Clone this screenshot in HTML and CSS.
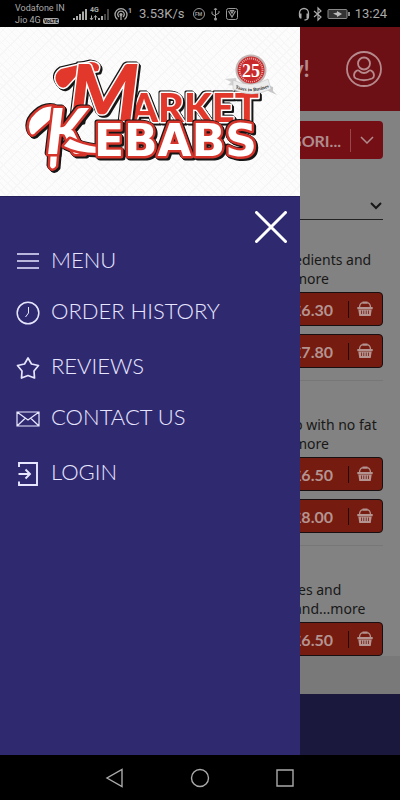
FILE: index.html
```html
<!DOCTYPE html>
<html lang="en">
<head>
<meta charset="utf-8">
<meta name="viewport" content="width=device-width, initial-scale=1">
<title>Market Kebabs</title>
<link rel="stylesheet" href="styles.css">
</head>
<body>
<svg class="defs" aria-hidden="true">
  <symbol id="basket" viewBox="0 0 16 16">
    <path d="M2.500 6.500Q2.500 3 5 1.800h6Q13.500 3 13.500 6.500" fill="none" stroke="currentColor" stroke-width="1.200"/>
    <path d="M5.500 1.500h5" stroke="currentColor" stroke-width="2"/>
    <path d="M.300 6h15.400v2.200H.300z" fill="currentColor"/>
    <path fill-rule="evenodd" fill="currentColor" d="M1.300 8.500h13.400l-1 6.500H2.300zM4 9.500v3.500h.800V9.500zM6.400 9.500v3.500h.800V9.500zM8.800 9.500v3.500h.800V9.500zM11.200 9.500v3.500h.800V9.500z"/>
  </symbol>
</svg>

<div class="status">
  <div class="carrier"><span>Vodafone IN</span><span>Jio 4G <b class="volte">VoLTE</b></span></div>
  <svg class="signals" width="60" height="18" viewBox="0 0 60 18" aria-hidden="true">
    <path d="M1 15v-2M4 15v-4M7 15V9M10 15V6.500M13 15V4" stroke="#aaa" stroke-width="2"/>
    <text x="17" y="7" class="tiny">4G</text>
    <path d="M18.500 10.500v4M17 13l1.500 2 1.500-2M22.500 15v-4M21 12.500l1.500-2 1.500 2" stroke="#aaa" fill="none"/>
    <path d="M26 15v-2M29 15v-4" stroke="#aaa" stroke-width="2"/>
    <path d="M32 15V9M35 15V4" stroke="#444" stroke-width="2"/>
    <g fill="none" stroke="#aaa" stroke-width="1.300"><path d="M44.500 14.500a6 6 0 1 1 7 0M46 12a3.300 3.300 0 1 1 4 0"/><path d="M48 9v6"/></g>
    <circle cx="48" cy="9.500" r="1.500" fill="#aaa"/>
    <text x="55" y="8" class="tiny">1</text>
  </svg>
  <span class="speed">3.53K/s</span>
  <svg class="services" width="48" height="16" viewBox="0 0 48 16" aria-hidden="true">
    <circle cx="7" cy="8" r="5.500" fill="none" stroke="#999"/>
    <text x="3" y="10" class="micro">FM</text>
    <g fill="none" stroke="#999"><path d="M23.500 12V3M23.500 10l-3.500-2V5.500M23.500 9l3.500-2V5"/><path d="M22 4l1.500-2L25 4"/></g>
    <circle cx="23.500" cy="13" r="1.500" fill="#999"/>
    <rect x="34.500" y="2.500" width="11" height="11" rx="2" fill="none" stroke="#999"/>
    <path d="M36.500 5l3.500 6 3.500-6M38.500 4.500h3L40 7z" fill="none" stroke="#999" stroke-width="1.200"/>
  </svg>
  <svg class="devices" width="53" height="16" viewBox="0 0 53 16" aria-hidden="true">
    <path d="M1.500 10V7a4.500 4.500 0 0 1 9 0v3q0 4-4 4" fill="none" stroke="#aaa" stroke-width="1.300"/>
    <path d="M1 7.500h2.500v5H2L1 11zM8.500 7.500H11V11l-1 1.500H8.500z" fill="#aaa"/>
    <path d="M16 5l7 6-3 3V2l3 3-7 6" fill="none" stroke="#aaa" stroke-width="1.200"/>
    <rect x="30" y="3.500" width="19" height="9" rx="1" fill="#333" stroke="#888"/>
    <path d="M50 6h2v4h-2z" fill="#888"/>
    <path d="M35 7.500l4-1V5l5 3-5 3V9.500z" fill="#bbb"/>
  </svg>
  <time class="clock">13:24</time>
</div>

<div class="stage">
  <main class="page">
    <header class="page-head">
      <h1>y!</h1>
      <button class="profile" type="button" aria-label="Account">
        <svg width="38" height="38" viewBox="0 0 38 38" fill="none" stroke="currentColor" stroke-width="1.800" aria-hidden="true">
          <circle cx="19" cy="19" r="17"/><circle cx="19" cy="13.500" r="6"/>
          <path d="M12 20.500q-3 1.500-3 5 0 2 2 3 8 3.500 16 0 2-1 2-3 0-3.500-3-5-2-.500-3 1-1.500 1.500-4 1.500t-4-1.500q-1-1.500-3-1z"/>
        </svg>
      </button>
    </header>
    <div class="filters">
      <button class="categories" type="button">
        <span>GORI...</span>
        <svg width="14" height="8" viewBox="0 0 14 8" fill="none" stroke="currentColor" stroke-width="1.500" aria-hidden="true"><path d="M1 1l6 6 6-6"/></svg>
      </button>
      <button class="sort" type="button" aria-label="Choose section">
        <svg width="12" height="8" viewBox="0 0 12 8" fill="none" stroke="currentColor" stroke-width="2" aria-hidden="true"><path d="M1 1l5 5 5-5"/></svg>
      </button>
    </div>
    <section class="dishes">
      <article class="dish">
        <p><span>edients and</span><span>more</span></p>
        <button class="price" type="button"><span>£6.30</span><i></i><svg aria-hidden="true"><use href="#basket"/></svg></button>
        <button class="price" type="button"><span>£7.80</span><i></i><svg aria-hidden="true"><use href="#basket"/></svg></button>
      </article>
      <article class="dish">
        <p><span>p with no fat</span><span>more</span></p>
        <button class="price" type="button"><span>£6.50</span><i></i><svg aria-hidden="true"><use href="#basket"/></svg></button>
        <button class="price" type="button"><span>£8.00</span><i></i><svg aria-hidden="true"><use href="#basket"/></svg></button>
      </article>
      <article class="dish">
        <p><span class="inset">es and</span><span>and...more</span></p>
        <button class="price" type="button"><span>£6.50</span><i></i><svg aria-hidden="true"><use href="#basket"/></svg></button>
      </article>
    </section>
    <div class="band"></div>
    <footer class="page-foot"></footer>
  </main>

  <aside class="drawer">
    <div class="brand">
      <svg viewBox="0 27 300 169" role="img" aria-label="Market Kebabs, 25 years in business">
        <g class="edge red">
          <text x="130" y="122" class="caps-top">ARKET</text>
        </g>
        <g class="edge red">
          <path d="M59 86Q51 76 61 69L91 62Q102 63 98 71L78 74 68 85Q64 90 59 86z"/>
          <text x="69" y="121" class="script-m">M</text>
        </g>
        <g class="edge white">
          <path d="M51 145L58 142 56 166Q52 171 50 166z"/>
          <path d="M30 132Q26 122 36 113 45 105 55 107 61 111 53 117L36 132Q32 137 30 132z"/>
          <text x="46" y="154" class="script-k">K</text>
          <path d="M70 139Q82 145 97 147L97 153Q78 153 64 146z"/>
          <text x="94" y="156" class="caps-low">EBABS</text>
        </g>
        <g>
          <circle cx="251" cy="70" r="14.500" fill="#c92a2b" stroke="#c4b5b5" stroke-width="2"/>
          <circle cx="251" cy="70" r="11.500" fill="none" stroke="#e7a9a9" stroke-width="2" stroke-dasharray="1 1"/>
          <circle cx="251" cy="71" r="10" fill="#c92a2b"/>
          <path d="M225 79l11-1 1 8-9-1 3-3z" fill="#d2d2d2"/><path d="M277 95l-11-5-1-6 8 3 0 4z" fill="#c6c6c6"/>
          <path d="M233 80q18 9 35-1l3 10q-20 10-38 0z" fill="#ececec" stroke="#bbb" stroke-width=".500"/>
          <path id="ribbon" d="M235 88q16 7 35-1" fill="none"/>
          <text x="242" y="77" class="years">25</text>
          <text class="motto"><textPath href="#ribbon">Years in Business</textPath></text>
        </g>
      </svg>
    </div>
    <button class="close" type="button" aria-label="Close menu">
      <svg width="32" height="32" viewBox="0 0 32 32" fill="none" stroke="currentColor" stroke-width="3" stroke-linecap="round" aria-hidden="true"><path d="M1.500 1.500l29 29M30.500 1.500l-29 29"/></svg>
    </button>
    <nav class="menu">
      <a href="#menu"><svg viewBox="0 0 24 24" aria-hidden="true"><path d="M1 4h22M1 11h22M1 18h22"/></svg>MENU</a>
      <a href="#orders"><svg viewBox="0 0 24 24" aria-hidden="true"><circle cx="12" cy="12" r="10.800"/><path d="M12.500 6v6l-3 4" stroke-width="1"/></svg>ORDER HISTORY</a>
      <a class="spaced" href="#reviews"><svg viewBox="0 0 24 24" aria-hidden="true"><path d="M12 2l3.500 6 7 1.500-4.500 5.500.500 7-6.500-2.500-6.500 2.500.500-7L1.500 9.500l7-1.500z" stroke-width="1.700" stroke-linejoin="round"/></svg>REVIEWS</a>
      <a href="#contact"><svg viewBox="0 0 24 24" aria-hidden="true"><path d="M1 5h22v14H1zM1 5l11 8 11-8M1 19l8.500-8M23 19l-8.500-8" stroke-width="1.200"/></svg>CONTACT US</a>
      <a class="spaced" href="#login"><svg viewBox="0 0 24 24" aria-hidden="true"><path d="M3 5V1h18v22H3v-3.500M2.500 12h11M9.500 7.500l4.500 4.500-4.500 4.500" stroke-width="1.900"/></svg>LOGIN</a>
    </nav>
  </aside>
</div>

<nav class="system" aria-label="System">
  <button type="button" aria-label="Back"><svg width="20" height="20" viewBox="0 0 20 20"><path d="M17 1.500v17L2 10z"/></svg></button>
  <button type="button" aria-label="Home"><svg width="20" height="20" viewBox="0 0 20 20"><circle cx="10" cy="10" r="8.500"/></svg></button>
  <button type="button" aria-label="Recent apps"><svg width="20" height="20" viewBox="0 0 20 20"><path d="M2 2h16v16H2z"/></svg></button>
</nav>
</body>
</html>
```
FILE: styles.css
```css
* { box-sizing: border-box; }

body {
  margin: 0;
  min-height: 100vh;
  display: flex;
  flex-direction: column;
  background: #000;
  font-family: Lato, "Liberation Sans", sans-serif;
}

button {
  margin: 0;
  padding: 0;
  border: 0;
  background: none;
  color: inherit;
  font: inherit;
}

svg { display: block; flex: none; }
h1, p { margin: 0; }
.defs { display: none; }

/* Phone status bar */
.status {
  display: flex;
  align-items: center;
  height: 27px;
  padding: 0 13px 0 15px;
  color: #aaa;
  font-family: Roboto, sans-serif;
  font-size: 13px;
}
.carrier {
  display: flex;
  flex-direction: column;
  width: 58px;
  font-size: 9px;
  line-height: 12px;
  white-space: nowrap;
}
.volte {
  padding: 0 1px;
  border-radius: 2px;
  background: #aaa;
  color: #000;
  font-size: 5px;
  line-height: 8px;
}
.tiny { font-size: 7px; font-weight: 700; fill: #aaa; }
.micro { font-size: 5px; font-weight: 700; fill: #999; }
.speed { margin-left: 6px; }
.services { margin-left: 7px; }
.devices { margin-left: auto; }
.clock { margin-left: 4px; }

/* Dimmed ordering page behind the drawer */
.stage {
  position: relative;
  flex: 1;
  display: flex;
  overflow: hidden;
}
.page {
  flex: 1;
  display: flex;
  flex-direction: column;
  background: #828282;
  color: #181818;
}
.page-head {
  display: flex;
  align-items: center;
  justify-content: space-between;
  height: 84px;
  padding: 0 17px 0 73%;
  background: #6d1016;
  color: #b68a8c;
}
.page-head h1 { font-size: 22px; line-height: 24px; }
.filters {
  display: flex;
  flex-direction: column;
  padding: 10px 17px 0 70%;
}
.categories {
  display: flex;
  align-items: center;
  justify-content: flex-end;
  height: 38px;
  padding-right: 9px;
  border-radius: 4px;
  background: #741015;
  color: #b08c8e;
  font-size: 16px;
  font-weight: 700;
}
.categories span {
  padding-right: 9px;
  border-right: 1px solid #99474a;
  line-height: 23px;
}
.categories svg { margin-left: 9px; }
.sort {
  display: flex;
  justify-content: flex-end;
  align-items: center;
  height: 61px;
  padding: 34px 1px 0 0;
  border-bottom: 1px solid #222;
}
.dishes { padding: 0 17px 0 70%; }
.dish {
  display: flex;
  flex-direction: column;
  gap: 8px;
  padding: 34px 0 12px;
  border-bottom: 1px solid #777;
}
.dish:first-child { padding-top: 30px; }
.dish:last-child { padding-bottom: 0; border-bottom: 0; }
.dish p {
  display: flex;
  flex-direction: column;
  margin-bottom: -4px;
  padding-left: 14px;
  font-family: "Noto Sans", sans-serif;
  font-size: 14px;
  line-height: 19px;
  white-space: nowrap;
}
.inset { padding-left: 4px; }
.price {
  display: flex;
  align-items: center;
  justify-content: flex-end;
  height: 34px;
  padding-right: 9px;
  border: 1px solid #181010;
  border-radius: 4px;
  background: #751b10;
  color: #b49490;
  font-size: 16px;
  font-weight: 700;
}
.price i {
  width: 1px;
  height: 17px;
  margin: 0 8px 0 15px;
  background: #200c08;
}
.price svg { width: 16px; height: 16px; }
.band { flex: 1; min-height: 37px; background: #797979; }
.page-foot { height: 61px; background: #1a183c; }

/* Navigation drawer */
.drawer {
  position: absolute;
  inset: 0 25% 0 0;
  display: flex;
  flex-direction: column;
  background: #2f2a70;
  color: #fff;
}
.brand {
  border-bottom: 1px solid #24205c;
  background:
    repeating-linear-gradient(45deg, transparent 0 4px, #f7f7f7 4px 5px),
    repeating-linear-gradient(-45deg, #fcfcfc 0 7px, #f6f6f6 7px 8px);
}
.brand svg { width: 100%; }
.edge {
  stroke-linejoin: round;
  paint-order: stroke;
  filter: drop-shadow(1px 1px 0 #161616) drop-shadow(-1px -1px 0 #161616) drop-shadow(1px 1px 0 #161616);
}
.red { fill: #e2382c; stroke: #fff; stroke-width: 3px; }
.white { fill: #fff; stroke: #d5342b; stroke-width: 5px; }
.script-m { font: italic 900 79px Lato, sans-serif; }
.script-k { font: italic 900 62px Lato, sans-serif; }
.caps-top { font: 900 40px Lato, sans-serif; }
.caps-low { font: 700 44px "DejaVu Sans", sans-serif; }
.years { font: 700 18px "Liberation Serif", serif; fill: #fff; }
.motto { font: 700 5px "Liberation Serif", serif; fill: #333; }
.close { align-self: flex-end; margin: 14px 13px 0 0; }
.menu {
  display: flex;
  flex-direction: column;
  gap: 21px;
  padding: 2px 16px;
}
.menu a {
  display: flex;
  align-items: center;
  gap: 11px;
  color: #e8e6ff;
  font-size: 22px;
  font-weight: 300;
  line-height: 30px;
  text-decoration: none;
  white-space: nowrap;
}
.menu .spaced { margin-top: 4px; }
.menu svg {
  width: 24px;
  height: 24px;
  margin-top: 4px;
  fill: none;
  stroke: #e8e6ff;
  stroke-width: 1.5;
}

/* Phone navigation bar */
.system {
  display: flex;
  justify-content: center;
  align-items: center;
  gap: 65px;
  height: 45px;
}
.system svg { fill: none; stroke: #aaa; stroke-width: 1.4; }
```
